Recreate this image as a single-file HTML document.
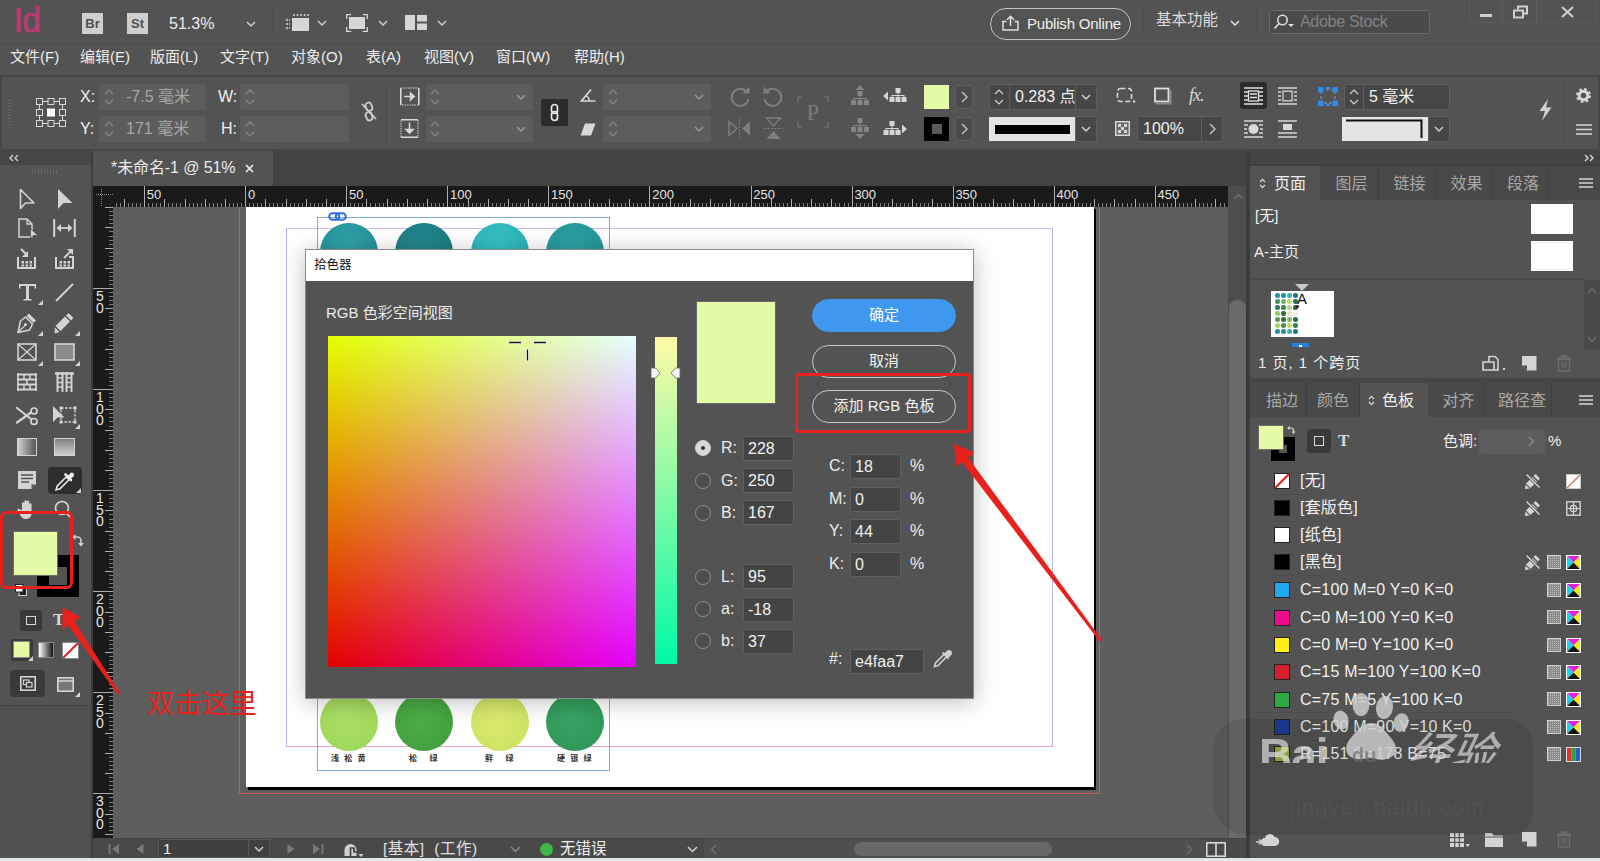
<!DOCTYPE html>
<html lang="zh-CN">
<head>
<meta charset="utf-8">
<title>InDesign 拾色器</title>
<style>
*{box-sizing:border-box;margin:0;padding:0}
html,body{width:1600px;height:861px;overflow:hidden;background:#535353}
body{position:relative;font-family:"Liberation Sans","Noto Sans CJK SC",sans-serif;color:#e6e6e6;font-size:15px;line-height:1}
.a{position:absolute}
.t{position:absolute;white-space:nowrap;line-height:20px;height:20px}
svg{position:absolute;overflow:visible}
/* ===== top bars ===== */
#appbar{left:0;top:0;width:1600px;height:44px;background:#535353}
#menubar{left:0;top:44px;width:1600px;height:31px;background:#535353;border-top:1px solid #4c4c4c}
#ctrl{left:0;top:75px;width:1600px;height:77px;background:#464646}
#ctrlin{left:2px;top:77px;width:1596px;height:72px;background:#535353}
.fld{position:absolute;background:#5d5d5d;border-radius:2px;height:26px}
.fldd{position:absolute;background:#464646;border:1px solid #5f5f5f;border-radius:2px;height:26px}
/* ===== doc area ===== */
#tabstrip{left:93px;top:151px;width:1157px;height:36px;background:#434343}
#doctab{left:93px;top:151px;width:180px;height:35px;background:#535353}
#hruler{left:93px;top:186px;width:1135px;height:21px;background:#1a1a1a}
#vruler{left:93px;top:207px;width:20px;height:631px;background:#1a1a1a}
#paste{left:113px;top:207px;width:1115px;height:631px;background:#5e5e5e;overflow:hidden}
#vscroll{left:1228px;top:186px;width:19px;height:652px;background:#4d4d4d}
#status{left:93px;top:838px;width:1157px;height:20px;background:#494949;border-top:1px solid #444}
#botstrip{left:0;top:858px;width:1600px;height:3px;background:#dfe6ee}
/* ===== toolbox ===== */
#tbhead{left:0;top:151px;width:91px;height:14px;background:#464646}
#tbox{left:0;top:165px;width:91px;height:541px;background:#535353}
#tbelow{left:0;top:705px;width:91px;height:153px;background:#505050;border-top:1px solid #424242}
#tbsep{left:91px;top:152px;width:2px;height:706px;background:#3d3d3d}
/* ===== right dock ===== */
#dock{left:1246px;top:152px;width:354px;height:706px;background:#464646;border-left:4px solid #3b3b3b}
#dockhead{left:1250px;top:152px;width:350px;height:14px;background:#444;border-bottom:2px solid #3c3c3c}
.ptabs{position:absolute;left:1250px;width:350px;height:34px;background:#494949}
.ptab{position:absolute;top:0;height:34px;color:#a8a8a8;font-size:16px;line-height:36px;text-align:center;border-right:1px solid #3f3f3f}
.ptab.on{background:#535353;color:#f0f0f0;border-right:none}
.pbody{position:absolute;left:1250px;width:350px;background:#535353}

.cir{width:58px;height:58px;border-radius:50%}
.lab{top:547px;width:58px;text-align:center;font-size:8px;line-height:10px;color:#333;font-weight:bold;letter-spacing:1.500px}

.btn{left:506px;width:144px;height:33px;border:1.5px solid #c9c9c9;border-radius:17px;text-align:center;font-size:15px;line-height:30px;color:#f2f2f2}
.rad{position:absolute;width:16px;height:16px;border-radius:50%;border:1.5px solid #8e8e8e;background:#4d4d4d}
.rad.on{background:#d8d8d8;border-color:#d8d8d8}
.rad.on::after{content:"";position:absolute;left:4.500px;top:4.500px;width:4px;height:4px;border-radius:50%;background:#333}
.dl{position:absolute;font-size:16px;line-height:20px;height:20px;color:#ececec;white-space:nowrap}
.df{position:absolute;height:25px;background:#444;border:1px solid #606060;border-radius:2px;font-size:16px;line-height:24px;padding-left:4px;color:#f0f0f0}
</style>
</head>
<body>
<!-- TOP BARS -->
<div class="a" id="appbar"></div>
<div class="a" id="menubar"></div>
<div class="a" id="ctrl"></div>
<div class="a" id="ctrlin"></div>
<!--TOPBAR-->
<div class="t" style="left:14px;top:2px;font-size:35px;line-height:36px;height:36px;color:#b83d74;font-weight:normal;-webkit-text-stroke:1px #b83d74;transform:scaleX(.95);transform-origin:0 0;letter-spacing:-.5px">Id</div>
<div class="a" style="left:82px;top:13px;width:21px;height:21px;background:#cfcfcf;color:#505050;font-size:13px;font-weight:bold;line-height:21px;text-align:center">Br</div>
<div class="a" style="left:127px;top:13px;width:21px;height:21px;background:#cfcfcf;color:#505050;font-size:13px;font-weight:bold;line-height:21px;text-align:center">St</div>
<div class="t" style="left:169px;top:14px;font-size:16px;color:#ececec">51.3%</div>
<svg style="left:246px;top:21px" width="10" height="7" viewBox="0 0 10 7"><path d="M1 1l4.0 4 4.0 -4" fill="none" stroke="#cfcfcf" stroke-width="1.500"/></svg><div class="a" style="left:272px;top:8px;width:1px;height:28px;background:#4b4b4b"></div>
<svg style="left:285px;top:13px" width="25" height="19" viewBox="0 0 25 19"><path d="M9 3v-2M12.500 3v-2M16 3v-2M19.500 3v-2M23 3v-2" stroke="#d6d6d6" stroke-width="1.500"/><rect x="7" y="5" width="17" height="13" fill="#d6d6d6"/><path d="M1 7h4M1 11h4M1 15h4" stroke="#d6d6d6" stroke-width="1.500" stroke-dasharray="2 1"/></svg>
<svg style="left:317px;top:20px" width="10" height="7" viewBox="0 0 10 7"><path d="M1 1l4.0 4 4.0 -4" fill="none" stroke="#cfcfcf" stroke-width="1.500"/></svg><svg style="left:346px;top:14px" width="22" height="18" viewBox="0 0 22 18"><rect x="3" y="3" width="16" height="12" fill="#d6d6d6"/><path d="M.7 5v-4.300h4.500M16.800 .7h4.500v4.300M21.300 13v4.300h-4.500M5.200 17.300h-4.500v-4.300" fill="none" stroke="#d6d6d6" stroke-width="1.300"/></svg>
<svg style="left:378px;top:20px" width="10" height="7" viewBox="0 0 10 7"><path d="M1 1l4.0 4 4.0 -4" fill="none" stroke="#cfcfcf" stroke-width="1.500"/></svg><svg style="left:405px;top:15px" width="22" height="15" viewBox="0 0 22 15"><rect x="0" y="0" width="10" height="15" fill="#d6d6d6"/><rect x="12" y="0" width="10" height="6.500" fill="#d6d6d6"/><rect x="12" y="8.500" width="10" height="6.500" fill="#d6d6d6"/></svg>
<svg style="left:437px;top:20px" width="10" height="7" viewBox="0 0 10 7"><path d="M1 1l4.0 4 4.0 -4" fill="none" stroke="#cfcfcf" stroke-width="1.500"/></svg><div class="a" style="left:990px;top:8px;width:141px;height:32px;border:1.5px solid #c4c4c4;border-radius:16px"></div>
<svg style="left:1002px;top:15px" width="17" height="16" viewBox="0 0 17 16"><path d="M4.500 6.500h-3.500v8.500h15v-8.500h-3.500" fill="none" stroke="#e0e0e0" stroke-width="1.500"/><path d="M8.500 11v-9M5 4.800l3.500-3.500 3.500 3.500" fill="none" stroke="#e0e0e0" stroke-width="1.500"/></svg>
<div class="t" style="left:1027px;top:14px;font-size:15px;color:#f0f0f0;letter-spacing:-.2px">Publish Online</div>
<div class="a" style="left:1143px;top:8px;width:1px;height:28px;background:#4b4b4b"></div>
<div class="t" style="left:1156px;top:10px;font-size:15.500px;color:#dcdcdc">基本功能</div>
<svg style="left:1230px;top:20px" width="10" height="7" viewBox="0 0 10 7"><path d="M1 1l4.0 4 4.0 -4" fill="none" stroke="#e6e6e6" stroke-width="1.500"/></svg><div class="a" style="left:1256px;top:8px;width:1px;height:28px;background:#4b4b4b"></div>
<div class="a" style="left:1269px;top:10px;width:161px;height:24px;background:#4a4a4a;border:1px solid #686868;border-radius:3px"></div>
<svg style="left:1273px;top:14px" width="22" height="16" viewBox="0 0 22 16"><circle cx="9.500" cy="6" r="4.700" fill="none" stroke="#dcdcdc" stroke-width="1.600"/><path d="M6 9.500l-4.500 5" stroke="#dcdcdc" stroke-width="1.800"/><path d="M15 10h6l-3 3z" fill="#dcdcdc"/></svg>
<div class="t" style="left:1300px;top:12px;font-size:16px;color:#828282;letter-spacing:-.3px">Adobe Stock</div>
<div class="a" style="left:1469px;top:0;width:127px;height:23px;border:1px solid #5b5b5b;border-top:none"></div>
<div class="a" style="left:1502px;top:0;width:1px;height:23px;background:#5e5e5e"></div><div class="a" style="left:1536px;top:0;width:1px;height:23px;background:#5e5e5e"></div>
<div class="a" style="left:1480px;top:14px;width:12px;height:3px;background:#d0d0d0"></div>
<svg style="left:1513px;top:5px" width="15" height="14" viewBox="0 0 15 14"><path d="M5 4.500v-3h9v7h-3.500" fill="none" stroke="#d0d0d0" stroke-width="2"/><rect x="1" y="5.500" width="9" height="7" fill="none" stroke="#d0d0d0" stroke-width="2"/></svg>
<svg style="left:1561px;top:6px" width="13" height="12" viewBox="0 0 13 12"><path d="M1 1l11 10M12 1l-11 10" stroke="#d0d0d0" stroke-width="2"/></svg>
<div class="t" style="left:10px;top:47px;font-size:15px;color:#ececec">文件(F)</div><div class="t" style="left:80px;top:47px;font-size:15px;color:#ececec">编辑(E)</div><div class="t" style="left:150px;top:47px;font-size:15px;color:#ececec">版面(L)</div><div class="t" style="left:220px;top:47px;font-size:15px;color:#ececec">文字(T)</div><div class="t" style="left:291px;top:47px;font-size:15px;color:#ececec">对象(O)</div><div class="t" style="left:366px;top:47px;font-size:15px;color:#ececec">表(A)</div><div class="t" style="left:424px;top:47px;font-size:15px;color:#ececec">视图(V)</div><div class="t" style="left:496px;top:47px;font-size:15px;color:#ececec">窗口(W)</div><div class="t" style="left:574px;top:47px;font-size:15px;color:#ececec">帮助(H)</div>
<div class="a" style="left:8px;top:100px;width:3px;height:26px;background:repeating-linear-gradient(180deg,#666 0 1px,transparent 1px 3px)"></div>
<svg style="left:35px;top:97px" width="32" height="31" viewBox="0 0 32 31"><g fill="none" stroke="#d8d8d8" stroke-width="1"><rect x="1.5" y="1.5" width="6" height="6"/><rect x="13.0" y="1.5" width="6" height="6"/><rect x="24.5" y="1.5" width="6" height="6"/><rect x="1.5" y="12.5" width="6" height="6"/><rect x="12.5" y="12" width="7" height="7" fill="#fff" stroke="#fff"/><rect x="24.5" y="12.5" width="6" height="6"/><rect x="1.5" y="23.5" width="6" height="6"/><rect x="13.0" y="23.5" width="6" height="6"/><rect x="24.5" y="23.5" width="6" height="6"/><path d="M8 4.500h5M19.500 4.500h5M8 26.500h5M19.500 26.500h5M4.500 8v4.500M4.500 19v4.500M27.500 8v4.500M27.500 19v4.500"/></g></svg>
<div class="t" style="left:80px;top:87px;font-size:16px;color:#f0f0f0">X:</div><div class="t" style="left:80px;top:119px;font-size:16px;color:#f0f0f0">Y:</div>
<div class="fld" style="left:99px;top:84px;width:107px"></div><div class="fld" style="left:99px;top:116px;width:107px"></div>
<svg style="left:104px;top:88px" width="10" height="18" viewBox="0 0 10 18"><path d="M1 6l4-4 4 4M1 12l4 4 4-4" fill="none" stroke="#8a8a8a" stroke-width="1.200"/></svg><svg style="left:104px;top:120px" width="10" height="18" viewBox="0 0 10 18"><path d="M1 6l4-4 4 4M1 12l4 4 4-4" fill="none" stroke="#8a8a8a" stroke-width="1.200"/></svg><div class="t" style="left:126px;top:87px;font-size:16px;color:#a6a6a6">-7.5 毫米</div><div class="t" style="left:126px;top:119px;font-size:16px;color:#a6a6a6">171 毫米</div>
<div class="t" style="left:218px;top:87px;font-size:16px;color:#f0f0f0">W:</div><div class="t" style="left:221px;top:119px;font-size:16px;color:#f0f0f0">H:</div>
<div class="fld" style="left:240px;top:84px;width:109px"></div><div class="fld" style="left:240px;top:116px;width:109px"></div>
<svg style="left:245px;top:88px" width="10" height="18" viewBox="0 0 10 18"><path d="M1 6l4-4 4 4M1 12l4 4 4-4" fill="none" stroke="#8a8a8a" stroke-width="1.200"/></svg><svg style="left:245px;top:120px" width="10" height="18" viewBox="0 0 10 18"><path d="M1 6l4-4 4 4M1 12l4 4 4-4" fill="none" stroke="#8a8a8a" stroke-width="1.200"/></svg><svg style="left:360px;top:101px" width="18" height="21" viewBox="0 0 18 21"><g fill="none" stroke="#d0d0d0" stroke-width="1.800"><rect x="6" y="1.500" width="6" height="8.500" rx="3" transform="rotate(-20 9 6)"/><rect x="6" y="11" width="6" height="8.500" rx="3" transform="rotate(-20 9 15)"/><path d="M2 3l14 15"/></g></svg>
<div class="a" style="left:386px;top:82px;width:1px;height:62px;background:#4a4a4a"></div>
<svg style="left:400px;top:87px" width="20" height="19" viewBox="0 0 20 19"><rect x=".5" y="1" width="18" height="17" fill="none" stroke="#d8d8d8" stroke-width="1" stroke-dasharray="1.500 1"/><path d="M.8 1v17M18.800 1v17" stroke="#d8d8d8" stroke-width="1.600"/><path d="M4 9.500h10M10.500 6l3.700 3.500-3.700 3.500z" fill="#d8d8d8" stroke="#d8d8d8" stroke-width="1.500"/></svg>
<svg style="left:400px;top:119px" width="20" height="19" viewBox="0 0 20 19"><rect x="1" y=".5" width="17" height="18" fill="none" stroke="#d8d8d8" stroke-width="1" stroke-dasharray="1.500 1"/><path d="M1 .8h17M1 18.200h17" stroke="#d8d8d8" stroke-width="1.600"/><path d="M9.500 3.500v10M6 10.500l3.500 3.700 3.500-3.700z" fill="#d8d8d8" stroke="#d8d8d8" stroke-width="1.500"/></svg>
<div class="fld" style="left:426px;top:84px;width:107px"></div><div class="fld" style="left:426px;top:116px;width:107px"></div>
<svg style="left:430px;top:88px" width="10" height="18" viewBox="0 0 10 18"><path d="M1 6l4-4 4 4M1 12l4 4 4-4" fill="none" stroke="#8a8a8a" stroke-width="1.200"/></svg><svg style="left:430px;top:120px" width="10" height="18" viewBox="0 0 10 18"><path d="M1 6l4-4 4 4M1 12l4 4 4-4" fill="none" stroke="#8a8a8a" stroke-width="1.200"/></svg><svg style="left:516px;top:94px" width="10" height="7" viewBox="0 0 10 7"><path d="M1 1l4.0 4 4.0 -4" fill="none" stroke="#9a9a9a" stroke-width="1.500"/></svg><svg style="left:516px;top:126px" width="10" height="7" viewBox="0 0 10 7"><path d="M1 1l4.0 4 4.0 -4" fill="none" stroke="#9a9a9a" stroke-width="1.500"/></svg><div class="a" style="left:541px;top:99px;width:27px;height:27px;background:#2c2c2c;border-radius:2px"></div>
<svg style="left:549px;top:103px" width="11" height="19" viewBox="0 0 11 19"><g fill="none" stroke="#e8e8e8" stroke-width="1.700"><rect x="2.500" y="1.500" width="6" height="9" rx="3"/><rect x="2.500" y="8.500" width="6" height="9" rx="3"/></g></svg>
<svg style="left:580px;top:88px" width="16" height="15" viewBox="0 0 16 15"><path d="M11 1.500l-9.500 11.500h14" fill="none" stroke="#d8d8d8" stroke-width="1.700"/><path d="M6 7.500a7 7 0 0 1 3.500 5.500" fill="none" stroke="#d8d8d8" stroke-width="1.400"/></svg>
<svg style="left:580px;top:123px" width="16" height="13" viewBox="0 0 16 13"><path d="M5 .5h10.500l-4.500 12h-10.500z" fill="#d8d8d8"/></svg>
<div class="fld" style="left:603px;top:84px;width:108px"></div><div class="fld" style="left:603px;top:116px;width:108px"></div>
<svg style="left:608px;top:88px" width="10" height="18" viewBox="0 0 10 18"><path d="M1 6l4-4 4 4M1 12l4 4 4-4" fill="none" stroke="#8a8a8a" stroke-width="1.200"/></svg><svg style="left:608px;top:120px" width="10" height="18" viewBox="0 0 10 18"><path d="M1 6l4-4 4 4M1 12l4 4 4-4" fill="none" stroke="#8a8a8a" stroke-width="1.200"/></svg><svg style="left:694px;top:94px" width="10" height="7" viewBox="0 0 10 7"><path d="M1 1l4.0 4 4.0 -4" fill="none" stroke="#9a9a9a" stroke-width="1.500"/></svg><svg style="left:694px;top:126px" width="10" height="7" viewBox="0 0 10 7"><path d="M1 1l4.0 4 4.0 -4" fill="none" stroke="#9a9a9a" stroke-width="1.500"/></svg><svg style="left:729px;top:85px" width="22" height="22" viewBox="0 0 22 22"><path d="M18.500 8a8.500 8.500 0 1 0 1 6" fill="none" stroke="#7e7e7e" stroke-width="2"/><path d="M13.500 8.500h7v-7z" fill="#7e7e7e"/></svg>
<svg style="left:762px;top:85px" width="22" height="22" viewBox="0 0 22 22"><path d="M3.500 8a8.500 8.500 0 1 1 -1 6" fill="none" stroke="#7e7e7e" stroke-width="2"/><path d="M8.500 8.500h-7v-7z" fill="#7e7e7e"/></svg>
<svg style="left:728px;top:119px" width="23" height="19" viewBox="0 0 23 19"><path d="M1 2.500v14l8-7z" fill="none" stroke="#7e7e7e" stroke-width="1.400"/><path d="M22 2.500v14l-8-7z" fill="#7e7e7e"/><path d="M11.500 0v19" stroke="#7e7e7e" stroke-width="1" stroke-dasharray="2 1.500"/></svg>
<svg style="left:764px;top:117px" width="19" height="23" viewBox="0 0 19 23"><path d="M2.500 1h14l-7 8z" fill="none" stroke="#7e7e7e" stroke-width="1.400"/><path d="M2.500 22h14l-7-8z" fill="#7e7e7e"/><path d="M0 11.500h19" stroke="#7e7e7e" stroke-width="1" stroke-dasharray="2 1.500"/></svg>
<svg style="left:797px;top:96px" width="32" height="32" viewBox="0 0 32 32"><path d="M1 6v-5h4M27 1h4v5M31 26v5h-4M5 31h-4v-5" fill="none" stroke="#7a7a7a" stroke-width="1.200"/><text x="16" y="24" font-family="Liberation Serif,serif" font-size="23" fill="#7a7a7a" text-anchor="middle">P</text></svg>
<svg style="left:848px;top:85px" width="24" height="22" viewBox="0 0 24 22"><g fill="#858585" stroke="none"><path d="M12 0l4.500 5h-9z"/><rect x="9.500" y="6" width="5" height="5"/><rect x="3" y="15" width="5" height="5"/><rect x="9.500" y="15" width="5" height="5"/><rect x="16" y="15" width="5" height="5"/><path d="M5 15v-2h14v2h-1v-1h-5.500v1h-1v-1h-5.500v1z"/><rect x="11.500" y="11" width="1" height="3"/></g></svg>
<svg style="left:848px;top:118px" width="24" height="22" viewBox="0 0 24 22"><g fill="#858585" stroke="none"><rect x="9.500" y="0" width="5" height="5"/><rect x="3" y="9" width="5" height="5"/><rect x="9.500" y="9" width="5" height="5"/><rect x="16" y="9" width="5" height="5"/><path d="M5 9v-2h14v2h-1v-1h-5.500v1h-1v-1h-5.500v1z"/><rect x="11.500" y="5" width="1" height="3"/><path d="M12 21l4.500-5h-9z"/></g></svg>
<svg style="left:883px;top:85px" width="24" height="22" viewBox="0 0 24 22"><g fill="#d6d6d6" stroke="none"><path d="M0 11l5-4.500v9z"/><rect x="12.500" y="3" width="5" height="5"/><rect x="6.500" y="12" width="5" height="5"/><rect x="12.500" y="12" width="5" height="5"/><rect x="18.500" y="12" width="5" height="5"/><path d="M8.500 12v-2h13v2h-1v-1h-5v1h-1v-1h-5v1z"/><rect x="14.500" y="8" width="1" height="3"/></g></svg>
<svg style="left:883px;top:118px" width="24" height="22" viewBox="0 0 24 22"><g fill="#d6d6d6" stroke="none"><path d="M24 11l-5-4.500v9z"/><rect x="6.500" y="3" width="5" height="5"/><rect x=".5" y="12" width="5" height="5"/><rect x="6.500" y="12" width="5" height="5"/><rect x="12.500" y="12" width="5" height="5"/><path d="M2.500 12v-2h13v2h-1v-1h-5v1h-1v-1h-5v1z"/><rect x="8.500" y="8" width="1" height="3"/></g></svg>
<div class="a" style="left:924px;top:85px;width:25px;height:24px;background:#e4faa7"></div>
<div class="a" style="left:955px;top:85px;width:18px;height:24px;background:#4a4a4a;border:1px solid #606060;border-radius:2px"></div><svg style="left:961px;top:91px" width="7" height="12" viewBox="0 0 7 12"><path d="M1 1l5 5-5 5" fill="none" stroke="#bdbdbd" stroke-width="1.500"/></svg><div class="a" style="left:924px;top:117px;width:25px;height:24px;background:#000"></div><div class="a" style="left:932px;top:124px;width:10px;height:10px;background:#5a5a5a"></div>
<div class="a" style="left:955px;top:117px;width:18px;height:24px;background:#4a4a4a;border:1px solid #606060;border-radius:2px"></div><svg style="left:961px;top:123px" width="7" height="12" viewBox="0 0 7 12"><path d="M1 1l5 5-5 5" fill="none" stroke="#bdbdbd" stroke-width="1.500"/></svg><div class="fldd" style="left:989px;top:84px;width:108px;height:26px"></div><div class="a" style="left:1009px;top:85px;width:1px;height:24px;background:#5f5f5f"></div><div class="a" style="left:1075px;top:85px;width:1px;height:24px;background:#5f5f5f"></div>
<svg style="left:994px;top:88px" width="10" height="18" viewBox="0 0 10 18"><path d="M1 6l4-4 4 4M1 12l4 4 4-4" fill="none" stroke="#d0d0d0" stroke-width="1.200"/></svg><svg style="left:1081px;top:94px" width="10" height="7" viewBox="0 0 10 7"><path d="M1 1l4.0 4 4.0 -4" fill="none" stroke="#d0d0d0" stroke-width="1.500"/></svg><div class="t" style="left:1015px;top:87px;font-size:16px;color:#f0f0f0">0.283 点</div>
<div class="a" style="left:989px;top:117px;width:86px;height:24px;background:#e4e4e4"></div><div class="a" style="left:995px;top:125px;width:75px;height:9px;background:#000"></div>
<div class="fldd" style="left:1075px;top:116px;width:22px;height:26px"></div><svg style="left:1081px;top:126px" width="10" height="7" viewBox="0 0 10 7"><path d="M1 1l4.0 4 4.0 -4" fill="none" stroke="#d0d0d0" stroke-width="1.500"/></svg><svg style="left:1116px;top:87px" width="20" height="17" viewBox="0 0 20 17"><rect x="1.500" y="1.500" width="14" height="13" rx="3" fill="none" stroke="#d8d8d8" stroke-width="1.600" stroke-dasharray="5 2.500"/><rect x="17" y="13.500" width="2.200" height="2.200" fill="#d8d8d8"/></svg>
<svg style="left:1153px;top:87px" width="19" height="19" viewBox="0 0 19 19"><rect x="2" y="1.500" width="13.500" height="13" fill="none" stroke="#e0e0e0" stroke-width="1.800"/><path d="M2.500 16.500h15v-13" fill="none" stroke="#888" stroke-width="2.200"/></svg>
<div class="t" style="left:1189px;top:85px;font-size:18px;font-style:italic;color:#d8d8d8;font-family:'Liberation Serif',serif;letter-spacing:-1px">fx.</div>
<svg style="left:1115px;top:121px" width="15" height="15" viewBox="0 0 15 15"><rect x=".7" y=".7" width="13.600" height="13.600" fill="#6a6a6a" stroke="#d8d8d8" stroke-width="1.400"/><path d="M3 3h3v3h-3zM9 3h3v3h-3zM6 6h3v3h-3zM3 9h3v3h-3zM9 9h3v3h-3z" fill="#d8d8d8"/></svg>
<div class="fldd" style="left:1137px;top:116px;width:86px;height:26px"></div><div class="a" style="left:1201px;top:117px;width:1px;height:24px;background:#5f5f5f"></div><svg style="left:1209px;top:123px" width="7" height="12" viewBox="0 0 7 12"><path d="M1 1l5 5-5 5" fill="none" stroke="#bdbdbd" stroke-width="1.500"/></svg><div class="t" style="left:1143px;top:119px;font-size:16px;color:#f0f0f0">100%</div>
<div class="a" style="left:1240px;top:82px;width:27px;height:27px;background:#2c2c2c;border-radius:3px"></div>
<svg style="left:1244px;top:87px" width="19" height="18" viewBox="0 0 19 18"><path d="M0 1h19M0 5h19M0 9h19M0 13h19M0 17h19" stroke="#e0e0e0" stroke-width="1.500"/><rect x="4.500" y="4" width="10" height="10" fill="#2c2c2c" stroke="#e0e0e0" stroke-width="1.300"/><path d="M6 7h7M6 10.500h7" stroke="#e0e0e0" stroke-width="1.300"/></svg>
<svg style="left:1278px;top:87px" width="19" height="18" viewBox="0 0 19 18"><path d="M0 1h19M0 17h19M0 5h3M0 9h3M0 13h3M16 5h3M16 9h3M16 13h3" stroke="#d8d8d8" stroke-width="1.500"/><rect x="5" y="4.200" width="9" height="9.600" fill="none" stroke="#d8d8d8" stroke-width="1.300"/></svg>
<svg style="left:1244px;top:120px" width="19" height="18" viewBox="0 0 19 18"><path d="M0 1h19M0 17h19M0 5h4M0 9h3M0 13h4M15 5h4M16 9h3M15 13h4" stroke="#d8d8d8" stroke-width="1.500"/><circle cx="9.500" cy="9" r="5" fill="#d8d8d8"/></svg>
<svg style="left:1278px;top:120px" width="19" height="18" viewBox="0 0 19 18"><path d="M0 1h19M0 13h19M0 17h19" stroke="#d8d8d8" stroke-width="1.500"/><rect x="5" y="4" width="9" height="6" fill="#d8d8d8"/></svg>
<svg style="left:1318px;top:87px" width="20" height="19" viewBox="0 0 20 19"><rect x="3" y="3" width="14" height="13" fill="none" stroke="#9a9a9a" stroke-width="1" stroke-dasharray="3 2"/><g fill="#2d8ceb"><rect x="0" y="0" width="5.500" height="5.500"/><rect x="14.500" y="0" width="5.500" height="5.500"/><rect x="0" y="13.500" width="5.500" height="5.500"/><rect x="14.500" y="13.500" width="5.500" height="5.500"/><rect x="8" y="0" width="4" height="2.500"/><rect x="8" y="16.500" width="4" height="2.500"/></g></svg>
<div class="fldd" style="left:1344px;top:84px;width:106px;height:26px"></div><div class="a" style="left:1363px;top:85px;width:1px;height:24px;background:#5f5f5f"></div>
<svg style="left:1349px;top:88px" width="10" height="18" viewBox="0 0 10 18"><path d="M1 6l4-4 4 4M1 12l4 4 4-4" fill="none" stroke="#d0d0d0" stroke-width="1.200"/></svg><div class="t" style="left:1369px;top:87px;font-size:16px;color:#f0f0f0">5 毫米</div>
<div class="a" style="left:1342px;top:117px;width:86px;height:24px;background:#e4e4e4"></div><svg style="left:1346px;top:119px" width="80" height="20" viewBox="0 0 80 20"><path d="M0 1.500h75.500v17.500" fill="none" stroke="#111" stroke-width="2"/></svg>
<div class="fldd" style="left:1428px;top:116px;width:22px;height:26px"></div><svg style="left:1434px;top:126px" width="10" height="7" viewBox="0 0 10 7"><path d="M1 1l4.0 4 4.0 -4" fill="none" stroke="#d0d0d0" stroke-width="1.500"/></svg><svg style="left:1538px;top:99px" width="15" height="22" viewBox="0 0 15 22"><path d="M10 0l-8.500 12h5.500l-3 10 9.500-13.500h-5.500z" fill="#d0d0d0"/></svg>
<div class="a" style="left:1564px;top:82px;width:1px;height:62px;background:#4a4a4a"></div>
<svg style="left:1576px;top:88px" width="15" height="15" viewBox="0 0 15 15"><circle cx="7.500" cy="7.500" r="4.300" fill="none" stroke="#d8d8d8" stroke-width="3"/><circle cx="7.500" cy="7.500" r="6.300" fill="none" stroke="#d8d8d8" stroke-width="2.400" stroke-dasharray="2.470 2.470"/></svg>
<svg style="left:1576px;top:124px" width="16" height="11" viewBox="0 0 16 11"><path d="M0 1h16M0 5.500h16M0 10h16" stroke="#d8d8d8" stroke-width="1.600"/></svg>

<!-- DOC AREA -->
<div class="a" id="tabstrip"></div>
<div class="a" id="doctab"></div>
<div class="a" id="hruler"><div class="a" style="left:20px;top:0;width:1115px;height:21px;overflow:hidden"><div class="a" style="left:-69.75px;top:0;width:1400px;height:21px;
background:
 repeating-linear-gradient(90deg,#adadad 0 1px,transparent 1px 101.075px) 0 0/100% 21px no-repeat,
 repeating-linear-gradient(90deg,#adadad 0 1px,transparent 1px 20.215px) 0 13px/100% 8px no-repeat,
 repeating-linear-gradient(90deg,#808080 0 1px,transparent 1px 4.043px) 0 17px/100% 4px no-repeat"></div></div><div class="t" style="left:53.8px;top:2px;font-size:13px;line-height:14px;height:14px;color:#e6e6e6">50</div><div class="t" style="left:154.9px;top:2px;font-size:13px;line-height:14px;height:14px;color:#e6e6e6">0</div><div class="t" style="left:256.0px;top:2px;font-size:13px;line-height:14px;height:14px;color:#e6e6e6">50</div><div class="t" style="left:357.1px;top:2px;font-size:13px;line-height:14px;height:14px;color:#e6e6e6">100</div><div class="t" style="left:458.1px;top:2px;font-size:13px;line-height:14px;height:14px;color:#e6e6e6">150</div><div class="t" style="left:559.2px;top:2px;font-size:13px;line-height:14px;height:14px;color:#e6e6e6">200</div><div class="t" style="left:660.3px;top:2px;font-size:13px;line-height:14px;height:14px;color:#e6e6e6">250</div><div class="t" style="left:761.4px;top:2px;font-size:13px;line-height:14px;height:14px;color:#e6e6e6">300</div><div class="t" style="left:862.4px;top:2px;font-size:13px;line-height:14px;height:14px;color:#e6e6e6">350</div><div class="t" style="left:963.5px;top:2px;font-size:13px;line-height:14px;height:14px;color:#e6e6e6">400</div><div class="t" style="left:1064.6px;top:2px;font-size:13px;line-height:14px;height:14px;color:#e6e6e6">450</div><div class="a" style="left:0;top:0;width:20px;height:21px;background:#1a1a1a"></div><div class="a" style="left:3px;top:8px;width:17px;height:1px;background:repeating-linear-gradient(90deg,#8a8a8a 0 1px,transparent 1px 2px)"></div><div class="a" style="left:8px;top:3px;width:1px;height:18px;background:repeating-linear-gradient(180deg,#8a8a8a 0 1px,transparent 1px 2px)"></div></div>
<div class="a" id="vruler"><div class="a" style="left:0;top:0;width:20px;height:631px;overflow:hidden"><div class="a" style="left:0;top:-19.60px;width:20px;height:800px;
background:
 repeating-linear-gradient(180deg,#adadad 0 1px,transparent 1px 101.075px) 0 0/20px 100% no-repeat,
 repeating-linear-gradient(180deg,#adadad 0 1px,transparent 1px 20.215px) 12px 0/8px 100% no-repeat,
 repeating-linear-gradient(180deg,#808080 0 1px,transparent 1px 4.043px) 16px 0/4px 100% no-repeat"></div></div><div class="a" style="left:1px;top:84.0px;width:12px;font-size:14px;line-height:11.5px;color:#e6e6e6;text-align:center">5<br>0</div><div class="a" style="left:1px;top:185.1px;width:12px;font-size:14px;line-height:11.5px;color:#e6e6e6;text-align:center">1<br>0<br>0</div><div class="a" style="left:1px;top:286.1px;width:12px;font-size:14px;line-height:11.5px;color:#e6e6e6;text-align:center">1<br>5<br>0</div><div class="a" style="left:1px;top:387.2px;width:12px;font-size:14px;line-height:11.5px;color:#e6e6e6;text-align:center">2<br>0<br>0</div><div class="a" style="left:1px;top:488.3px;width:12px;font-size:14px;line-height:11.5px;color:#e6e6e6;text-align:center">2<br>5<br>0</div><div class="a" style="left:1px;top:589.4px;width:12px;font-size:14px;line-height:11.5px;color:#e6e6e6;text-align:center">3<br>0<br>0</div></div>
<div class="a" id="paste">
<div class="a" style="left:126px;top:-10px;width:861px;height:597px;border:1px solid #cc5a55"></div>
<div class="a" style="left:135px;top:2px;width:848px;height:581px;background:#000"></div>
<div class="a" id="page" style="left:133px;top:0;width:848px;height:580px;background:#fff">
  <div class="a" style="left:40px;top:21px;width:767px;height:519px;border:1px solid #b9b5ea;border-top-color:#d0b4e4;border-bottom-color:#e4a4c4"></div>
  <div class="a" style="left:71px;top:10px;width:293px;height:554px;border:1px solid #7fabdc"></div>
  <div class="a cir" style="left:74px;top:16px;background:radial-gradient(circle at 45% 40%,#2fa5aa,#25909a 75%,#208288)"></div>
  <div class="a cir" style="left:149px;top:16px;background:radial-gradient(circle at 45% 40%,#228a90,#1d7a80 75%,#1a6e74)"></div>
  <div class="a cir" style="left:225px;top:16px;background:radial-gradient(circle at 45% 40%,#38c4c8,#2cb0b5 75%,#27a2a8)"></div>
  <div class="a cir" style="left:300px;top:16px;background:radial-gradient(circle at 45% 40%,#2da4a6,#259498 75%,#20888c)"></div>
  <div class="a cir" style="left:74px;top:486px;background:radial-gradient(circle at 45% 40%,#aee068,#9fd85a 75%,#94cd52)"></div>
  <div class="a cir" style="left:149px;top:486px;background:radial-gradient(circle at 45% 40%,#4fae48,#42a03e 75%,#389238)"></div>
  <div class="a cir" style="left:225px;top:486px;background:radial-gradient(circle at 45% 40%,#dcec70,#cfe262 75%,#c2d658)"></div>
  <div class="a cir" style="left:300px;top:486px;background:radial-gradient(circle at 45% 40%,#38a463,#2f9858 75%,#288a4e)"></div>
  <div class="a lab" style="left:74px">浅 松 黄</div>
  <div class="a lab" style="left:149px">松&nbsp;&nbsp;&nbsp;绿</div>
  <div class="a lab" style="left:225px">鲜&nbsp;&nbsp;&nbsp;绿</div>
  <div class="a lab" style="left:300px">硬 银 绿</div>
  <svg style="left:82px;top:5px" width="19" height="9" viewBox="0 0 19 9"><rect x="1.200" y="1.200" width="10" height="6.600" rx="3.300" fill="none" stroke="#2b6fd6" stroke-width="2"/><rect x="7.800" y="1.200" width="10" height="6.600" rx="3.300" fill="none" stroke="#2b6fd6" stroke-width="2"/></svg>
</div>
</div>
<div class="a" id="vscroll"><svg style="left:5px;top:7px" width="11" height="7" viewBox="0 0 11 7"><path d="M1 6l4.500-4.500 4.500 4.500" fill="none" stroke="#6e6e6e" stroke-width="1.500"/></svg><div class="a" style="left:1px;top:114px;width:17px;height:540px;border-radius:8px 8px 0 0;background:#6a6a6a"></div></div>
<div class="a" id="status"><svg style="left:15px;top:4px" width="14" height="12" viewBox="0 0 14 12"><path d="M1.500 1v10" stroke="#7a7a7a" stroke-width="1.800"/><path d="M11 1v10l-7-5z" fill="#7a7a7a"/></svg>
<svg style="left:43px;top:4px" width="8" height="12" viewBox="0 0 8 12"><path d="M7.500 1v10l-7-5z" fill="#7a7a7a"/></svg>
<div class="a" style="left:65px;top:0;width:112px;height:19px;background:#404040;border:1px solid #585858"></div><div class="t" style="left:70px;top:0;font-size:15px;color:#f0f0f0">1</div><div class="a" style="left:155px;top:0;width:22px;height:19px;border:1px solid #585858"></div><svg style="left:161px;top:7px" width="10" height="7" viewBox="0 0 10 7"><path d="M1 1l4 4 4-4" fill="none" stroke="#d0d0d0" stroke-width="1.500"/></svg>
<svg style="left:194px;top:4px" width="8" height="12" viewBox="0 0 8 12"><path d="M.5 1v10l7-5z" fill="#7a7a7a"/></svg>
<svg style="left:217px;top:4px" width="14" height="12" viewBox="0 0 14 12"><path d="M12.500 1v10" stroke="#7a7a7a" stroke-width="1.800"/><path d="M3 1v10l7-5z" fill="#7a7a7a"/></svg>
<svg style="left:249px;top:2px" width="22" height="17" viewBox="0 0 22 17"><path d="M2.500 15v-6a6 6 0 0 1 12 0v6z" fill="#d0d0d0"/><path d="M8.500 15v-8h3.500v4h3" fill="none" stroke="#424242" stroke-width="1.700"/><path d="M16.500 13h5l-2.500 3z" fill="#d0d0d0"/></svg>
<div class="t" style="left:290px;top:0;font-size:15.500px;color:#e0e0e0;letter-spacing:.5px">[基本]&nbsp;&nbsp;(工作)</div><svg style="left:417px;top:7px" width="11" height="7" viewBox="0 0 11 7"><path d="M1 1l4.500 4.500 4.500-4.500" fill="none" stroke="#8a8a8a" stroke-width="1.500"/></svg>
<div class="a" style="left:447px;top:4px;width:13px;height:13px;border-radius:50%;background:#3fb54a"></div><div class="t" style="left:467px;top:0;font-size:15.500px;color:#f0f0f0">无错误</div><svg style="left:594px;top:7px" width="11" height="7" viewBox="0 0 11 7"><path d="M1 1l4.500 4.500 4.500-4.500" fill="none" stroke="#d0d0d0" stroke-width="1.500"/></svg>
<div class="a" style="left:611px;top:0;width:501px;height:20px;background:#4f4f4f"></div><svg style="left:617px;top:5px" width="7" height="11" viewBox="0 0 7 11"><path d="M6 1l-4.500 4.500 4.500 4.500" fill="none" stroke="#6e6e6e" stroke-width="1.500"/></svg>
<div class="a" style="left:761px;top:3px;width:198px;height:14px;border-radius:7px;background:#686868"></div><svg style="left:1093px;top:5px" width="7" height="11" viewBox="0 0 7 11"><path d="M1 1l4.500 4.500-4.500 4.500" fill="none" stroke="#6e6e6e" stroke-width="1.500"/></svg>
<svg style="left:1113px;top:3px" width="20" height="15" viewBox="0 0 20 15"><rect x=".8" y=".8" width="18.400" height="13.400" fill="none" stroke="#d8d8d8" stroke-width="1.600"/><path d="M10 1v13" stroke="#d8d8d8" stroke-width="1.600"/></svg>
</div>
<!-- TOOLBOX -->
<div class="a" id="tbhead"></div>
<div class="a" id="tbox"></div>
<div class="a" id="tbelow"></div>
<div class="a" id="tbsep"></div>
<!--TOOLS-->
<svg style="left:9px;top:154px" width="10" height="8" viewBox="0 0 10 8"><path d="M4 1l-3 3 3 3M9 1l-3 3 3 3" fill="none" stroke="#d4d4d4" stroke-width="1.400"/></svg>
<div class="a" style="left:32px;top:169px;width:26px;height:5px;background:repeating-linear-gradient(90deg,#686868 0 1px,transparent 1px 3px)"></div>
<svg style="left:19px;top:188px" width="17" height="23" viewBox="0 0 17 23"><path d="M1.500 1.500v19l5-5.500h8.500z" fill="none" stroke="#d4d4d4" stroke-width="1.600" stroke-linejoin="round"/></svg>
<svg style="left:57px;top:188px" width="17" height="23" viewBox="0 0 17 23"><path d="M1 1v20l5.500-6h9z" fill="#d4d4d4"/></svg>
<svg style="left:18px;top:218px" width="20" height="21" viewBox="0 0 20 21"><path d="M1 1h8l5 5v13h-13z" fill="none" stroke="#d4d4d4" stroke-width="1.500"/><path d="M9 1v5h5" fill="none" stroke="#d4d4d4" stroke-width="1.300"/><path d="M12.500 10.500v10l2.800-3h4.500z" fill="#d4d4d4" stroke="#535353" stroke-width=".8"/></svg>
<svg style="left:53px;top:219px" width="23" height="18" viewBox="0 0 23 18"><path d="M1.200 0v18M21.800 0v18" stroke="#d4d4d4" stroke-width="2"/><path d="M5 9h13" stroke="#d4d4d4" stroke-width="1.800"/><path d="M3.500 9l4.500-4v8zM19.500 9l-4.500-4v8z" fill="#d4d4d4"/></svg>
<svg style="left:17px;top:248px" width="20" height="21" viewBox="0 0 20 21"><path d="M1 9v11h17v-11" fill="none" stroke="#d4d4d4" stroke-width="2"/><path d="M4.500 13h2.500v2.500h-2.500zM8.500 13h2.500v2.500h-2.500zM12.500 13h2.500v2.500h-2.500zM4.500 16.500h2.500v2h-2.500zM8.500 16.500h2.500v2h-2.500zM12.500 16.500h2.500v2h-2.500z" fill="#d4d4d4"/><path d="M4 1l5.500 5.500" stroke="#d4d4d4" stroke-width="2"/><path d="M11 3v6h-6z" fill="#d4d4d4"/></svg>
<svg style="left:55px;top:248px" width="20" height="21" viewBox="0 0 20 21"><path d="M1 9v11h17v-11h-4" fill="none" stroke="#d4d4d4" stroke-width="2"/><path d="M4.500 13h2.500v2.500h-2.500zM8.500 13h2.500v2.500h-2.500zM12.500 13h2.500v2.500h-2.500zM4.500 16.500h2.500v2h-2.500zM8.500 16.500h2.500v2h-2.500zM12.500 16.500h2.500v2h-2.500z" fill="#d4d4d4"/><path d="M9 10l6.500-6.500" stroke="#d4d4d4" stroke-width="2"/><path d="M12 1h6v6z" fill="#d4d4d4"/></svg>
<svg style="left:18px;top:283px" width="19" height="19" viewBox="0 0 19 19"><path d="M1 1h17v4.500h-1.500v-2.500h-5.500v13h2.500v1.500h-8v-1.500h2.500v-13h-5.500v2.500h-1.500z" fill="#d4d4d4"/></svg>
<svg style="left:38px;top:300px" width="5" height="5" viewBox="0 0 5 5"><path d="M5 0v5h-5z" fill="#d4d4d4"/></svg><svg style="left:55px;top:283px" width="19" height="19" viewBox="0 0 19 19"><path d="M1 18l17-17" stroke="#d4d4d4" stroke-width="1.800"/></svg>
<svg style="left:16px;top:312px" width="22" height="22" viewBox="0 0 22 22"><path d="M13 1.500l7 7-2.500 2.500-7-7z" fill="#d4d4d4"/><path d="M9.500 5l7 7-3 6-11.500 2.500 2.500-11.500z" fill="none" stroke="#d4d4d4" stroke-width="1.600" stroke-linejoin="round"/><path d="M2.500 20l6.500-6.500" stroke="#d4d4d4" stroke-width="1.300"/><circle cx="9.500" cy="12.500" r="1.500" fill="#d4d4d4"/></svg>
<svg style="left:38px;top:331px" width="5" height="5" viewBox="0 0 5 5"><path d="M5 0v5h-5z" fill="#d4d4d4"/></svg><svg style="left:54px;top:312px" width="21" height="22" viewBox="0 0 21 22"><path d="M14.500 1l5 5-2.500 2.500-5-5z" fill="#d4d4d4"/><path d="M11 4.500l5 5-9.500 9.500-5-5z" fill="#d4d4d4"/><path d="M1 15.500l4.500 4.500-5 1.500z" fill="#d4d4d4"/></svg>
<svg style="left:75px;top:331px" width="5" height="5" viewBox="0 0 5 5"><path d="M5 0v5h-5z" fill="#d4d4d4"/></svg><svg style="left:17px;top:343px" width="20" height="18" viewBox="0 0 20 18"><rect x="1" y="1" width="18" height="16" fill="none" stroke="#d4d4d4" stroke-width="1.600"/><path d="M1 1l18 16M19 1l-18 16" stroke="#d4d4d4" stroke-width="1.300"/></svg>
<svg style="left:38px;top:361px" width="5" height="5" viewBox="0 0 5 5"><path d="M5 0v5h-5z" fill="#d4d4d4"/></svg><svg style="left:54px;top:343px" width="21" height="18" viewBox="0 0 21 18"><rect x="1" y="1" width="19" height="16" fill="#8a8a8a" stroke="#d4d4d4" stroke-width="1.600"/></svg>
<svg style="left:75px;top:361px" width="5" height="5" viewBox="0 0 5 5"><path d="M5 0v5h-5z" fill="#d4d4d4"/></svg><svg style="left:17px;top:373px" width="20" height="18" viewBox="0 0 20 18"><path d="M0 1.500h20M0 6.500h20M0 11.500h20M0 16.500h20" stroke="#d4d4d4" stroke-width="2"/><path d="M1 0v18M19 0v18M7 1.500v5M13 1.500v5M10 6.500v5M7 11.500v5M13 11.500v5" stroke="#d4d4d4" stroke-width="1.600"/></svg>
<svg style="left:55px;top:372px" width="19" height="20" viewBox="0 0 19 20"><path d="M0 1.500h19" stroke="#d4d4d4" stroke-width="2.400"/><path d="M2.500 0v20M7.500 0v20M11.500 0v20M16.500 0v20" stroke="#d4d4d4" stroke-width="2"/><path d="M2.500 6h5M11.500 6h5M2.500 10.500h5M11.500 10.500h5M2.500 15h5M11.500 15h5" stroke="#d4d4d4" stroke-width="1.500"/></svg>
<svg style="left:16px;top:406px" width="23" height="20" viewBox="0 0 23 20"><path d="M1 2l14 11M1 16.500l14-10" stroke="#d4d4d4" stroke-width="2.200" stroke-linecap="round"/><circle cx="18" cy="5" r="3" fill="none" stroke="#d4d4d4" stroke-width="1.700"/><circle cx="18" cy="15.500" r="3" fill="none" stroke="#d4d4d4" stroke-width="1.700"/></svg>
<svg style="left:52px;top:405px" width="25" height="21" viewBox="0 0 25 21"><rect x="9" y="3" width="14" height="14" fill="none" stroke="#d4d4d4" stroke-width="1.300" stroke-dasharray="2.500 1.500"/><path d="M7.500 1.500h3v3h-3zM21.500 1.500h3v3h-3zM7.500 15.500h3v3h-3zM21.500 15.500h3v3h-3z" fill="#d4d4d4"/><path d="M1 1v16l4.500-4.500h7z" fill="#d4d4d4"/></svg>
<svg style="left:75px;top:424px" width="5" height="5" viewBox="0 0 5 5"><path d="M5 0v5h-5z" fill="#d4d4d4"/></svg><div class="a" style="left:17px;top:438px;width:20px;height:18px;border:1.5px solid #d4d4d4;background:linear-gradient(90deg,#d0d0d0,#555)"></div>
<div class="a" style="left:54px;top:438px;width:21px;height:18px;border:1.5px solid #d4d4d4;background:linear-gradient(180deg,#808080,#cfcfcf)"></div>
<svg style="left:18px;top:471px" width="18" height="18" viewBox="0 0 18 18"><path d="M0 0h18v13l-5 5h-13z" fill="#d4d4d4"/><path d="M3 4h12M3 7.500h12M3 11h8" stroke="#535353" stroke-width="1.500"/><path d="M13 18v-5h5" fill="#535353" stroke="#d4d4d4" stroke-width="1"/></svg>
<div class="a" style="left:48px;top:467px;width:34px;height:27px;background:#2e2e2e;border-radius:4px"></div>
<svg style="left:54px;top:469px" width="22" height="23" viewBox="0 0 22 23"><path d="M2 21l1.200-4 9-9 2.800 2.800-9 9z" fill="none" stroke="#eee" stroke-width="1.500"/><path d="M11.500 5.500l5.500 5.500" stroke="#eee" stroke-width="2.600" stroke-linecap="round"/><path d="M13.500 7.500l3-3.500a2.300 2.300 0 0 1 3.200 3.200l-3.500 3z" fill="#eee"/></svg>
<svg style="left:76px;top:488px" width="5" height="5" viewBox="0 0 5 5"><path d="M5 0v5h-5z" fill="#d4d4d4"/></svg><svg style="left:17px;top:500px" width="19" height="20" viewBox="0 0 19 20"><path d="M5 10v-6.500a1.200 1.200 0 0 1 2.400 0v5v-7a1.200 1.200 0 0 1 2.400 0v7v-6.500a1.200 1.200 0 0 1 2.400 0v7v-4.500a1.200 1.200 0 0 1 2.400 0v8c0 4-2 6.500-5.500 6.500s-4.500-1.500-6.500-5l-2-3.500c-.8-1.500 1-2.500 2-1.200z" fill="#d4d4d4"/></svg>
<svg style="left:54px;top:500px" width="20" height="20" viewBox="0 0 20 20"><circle cx="8" cy="8" r="6.500" fill="none" stroke="#d4d4d4" stroke-width="1.700"/><path d="M12.500 13l6 6" stroke="#d4d4d4" stroke-width="2.400"/></svg>
<div class="a" style="left:37px;top:555px;width:42px;height:42px;background:#000"></div><div class="a" style="left:49px;top:567px;width:18px;height:18px;background:#535353"></div>
<div class="a" style="left:13px;top:531px;width:45px;height:45px;background:#e4faa7;border:1px solid #6d6d6d"></div>
<svg style="left:72px;top:534px" width="11" height="13" viewBox="0 0 11 13"><path d="M1 3h4.500a3.500 3.500 0 0 1 3.500 3.500v3" fill="none" stroke="#d4d4d4" stroke-width="1.500"/><path d="M0 3l3.500-3v6zM9 12.500l-3-3.500h6z" fill="#d4d4d4"/></svg>
<svg style="left:15px;top:584px" width="12" height="12" viewBox="0 0 12 12"><rect x="4" y="4" width="7.500" height="7.500" fill="#222" stroke="#d4d4d4" stroke-width="1"/><rect x=".5" y=".5" width="7.500" height="7.500" fill="#fff" stroke="#222" stroke-width="1"/></svg>
<div class="a" style="left:20px;top:610px;width:22px;height:21px;background:#3a3a3a;border-radius:3px"></div><div class="a" style="left:26px;top:616px;width:10px;height:9px;border:1.5px solid #d8d8d8"></div>
<div class="t" style="left:53px;top:610px;font-family:'Liberation Serif',serif;font-weight:bold;font-size:17px;color:#d8d8d8">T</div>
<div class="a" style="left:11px;top:639px;width:22px;height:22px;background:#3a3a3a;border-radius:2px"></div><div class="a" style="left:13px;top:641px;width:17px;height:17px;background:#e4faa7;border:1px solid #888"></div><svg style="left:28px;top:656px" width="5" height="5" viewBox="0 0 5 5"><path d="M5 0v5h-5z" fill="#d4d4d4"/></svg><div class="a" style="left:38px;top:642px;width:16px;height:16px;background:linear-gradient(90deg,#fff,#111);border:1px solid #888"></div>
<svg style="left:62px;top:642px" width="17" height="17" viewBox="0 0 17 17"><rect x=".5" y=".5" width="16" height="16" fill="#fff" stroke="#888"/><path d="M1 16l15-15" stroke="#e0201c" stroke-width="2"/></svg>
<div class="a" style="left:10px;top:670px;width:35px;height:27px;background:#3a3a3a;border-radius:4px"></div>
<svg style="left:20px;top:676px" width="16" height="15" viewBox="0 0 16 15"><rect x=".8" y=".8" width="14.400" height="13.400" fill="none" stroke="#d4d4d4" stroke-width="1.600"/><rect x="3.500" y="4" width="5.500" height="4.500" fill="none" stroke="#d4d4d4" stroke-width="1.200"/><rect x="6.500" y="6.500" width="5.500" height="4.500" fill="#3a3a3a" stroke="#d4d4d4" stroke-width="1.200"/></svg>
<svg style="left:57px;top:677px" width="17" height="15" viewBox="0 0 17 15"><rect x=".8" y=".8" width="15.400" height="13.400" fill="#777" stroke="#d4d4d4" stroke-width="1.600"/><path d="M1 4h15" stroke="#d4d4d4" stroke-width="1.500"/></svg>
<svg style="left:75px;top:692px" width="5" height="5" viewBox="0 0 5 5"><path d="M5 0v5h-5z" fill="#d4d4d4"/></svg><!-- RIGHT DOCK -->
<div class="a" id="dock"></div>
<div class="a" id="dockhead"></div>
<div class="t" style="left:111px;top:158px;font-size:16px;color:#ececec;letter-spacing:-.1px">*未命名-1 @ 51%</div>
<svg style="left:245px;top:164px" width="9" height="9" viewBox="0 0 9 9"><path d="M1 1l7 7M8 1l-7 7" stroke="#ececec" stroke-width="1.700"/></svg>
<svg style="left:1584px;top:154px" width="10" height="8" viewBox="0 0 10 8"><path d="M1 1l3 3-3 3M6 1l3 3-3 3" fill="none" stroke="#d4d4d4" stroke-width="1.400"/></svg>
<div class="ptabs" style="top:166px"><div class="ptab on" style="left:0;width:70px;padding-left:10px">页面</div><div class="ptab" style="left:70px;width:59px;padding-left:5px">图层</div><div class="ptab" style="left:129px;width:57px;padding-left:5px">链接</div><div class="ptab" style="left:186px;width:57px;padding-left:5px">效果</div><div class="ptab" style="left:243px;width:56px;padding-left:5px">段落</div></div>
<svg style="left:1259px;top:178px" width="7" height="11" viewBox="0 0 7 11"><path d="M1 4l2.500-2.500 2.500 2.500M1 7l2.500 2.500 2.500-2.500" fill="none" stroke="#d0d0d0" stroke-width="1.300"/></svg>
<svg style="left:1579px;top:178px" width="14" height="10" viewBox="0 0 14 10"><path d="M0 1h14M0 5h14M0 9h14" stroke="#d4d4d4" stroke-width="1.500"/></svg>
<div class="pbody" style="top:200px;height:178px"></div>
<div class="t" style="left:1255px;top:206px;font-size:15px;color:#f0f0f0">[无]</div><div class="a" style="left:1531px;top:204px;width:42px;height:30px;background:#fff"></div><div class="t" style="left:1254px;top:242px;font-size:15px;color:#f0f0f0">A-主页</div><div class="a" style="left:1531px;top:241px;width:42px;height:30px;background:#fff"></div>
<div class="a" style="left:1250px;top:278px;width:334px;height:2px;background:#484848"></div><div class="a" style="left:1584px;top:280px;width:16px;height:70px;background:#4a4a4a"></div><svg style="left:1587px;top:287px" width="10" height="7" viewBox="0 0 10 7"><path d="M1 6l4-4.500 4 4.500" fill="none" stroke="#6e6e6e" stroke-width="1.400"/></svg>
<svg style="left:1587px;top:336px" width="10" height="7" viewBox="0 0 10 7"><path d="M1 1l4 4.500 4-4.500" fill="none" stroke="#6e6e6e" stroke-width="1.400"/></svg>
<svg style="left:1295px;top:284px" width="14" height="7" viewBox="0 0 14 7"><path d="M0 0h14l-7 7z" fill="#c8c8c8"/></svg>
<div class="a" style="left:1271px;top:291px;width:63px;height:46px;background:#fff"><div class="a" style="left:4px;top:2px;width:4.500px;height:4.500px;border-radius:50%;background:#2a8e96"></div><div class="a" style="left:10px;top:2px;width:4.500px;height:4.500px;border-radius:50%;background:#2a8e96"></div><div class="a" style="left:16px;top:2px;width:4.500px;height:4.500px;border-radius:50%;background:#3cb0b4"></div><div class="a" style="left:22px;top:2px;width:4.500px;height:4.500px;border-radius:50%;background:#237a80"></div><div class="a" style="left:4px;top:8px;width:4.500px;height:4.500px;border-radius:50%;background:#3a9a6a"></div><div class="a" style="left:10px;top:8px;width:4.500px;height:4.500px;border-radius:50%;background:#7ab060"></div><div class="a" style="left:16px;top:8px;width:4.500px;height:4.500px;border-radius:50%;background:#c8d870"></div><div class="a" style="left:22px;top:8px;width:4.500px;height:4.500px;border-radius:50%;background:#2a6e50"></div><div class="a" style="left:4px;top:14px;width:4.500px;height:4.500px;border-radius:50%;background:#2a7a60"></div><div class="a" style="left:10px;top:14px;width:4.500px;height:4.500px;border-radius:50%;background:#3a8a50"></div><div class="a" style="left:16px;top:14px;width:4.500px;height:4.500px;border-radius:50%;background:#b8d080"></div><div class="a" style="left:22px;top:14px;width:4.500px;height:4.500px;border-radius:50%;background:#285a48"></div><div class="a" style="left:4px;top:20px;width:4.500px;height:4.500px;border-radius:50%;background:#98c860"></div><div class="a" style="left:10px;top:20px;width:4.500px;height:4.500px;border-radius:50%;background:#386a38"></div><div class="a" style="left:16px;top:20px;width:4.500px;height:4.500px;border-radius:50%;background:#e0e8c0"></div><div class="a" style="left:22px;top:20px;width:4.500px;height:4.500px;border-radius:50%;background:#f0f0e0"></div><div class="a" style="left:4px;top:26px;width:4.500px;height:4.500px;border-radius:50%;background:#58a050"></div><div class="a" style="left:10px;top:26px;width:4.500px;height:4.500px;border-radius:50%;background:#2a7040"></div><div class="a" style="left:16px;top:26px;width:4.500px;height:4.500px;border-radius:50%;background:#88b858"></div><div class="a" style="left:22px;top:26px;width:4.500px;height:4.500px;border-radius:50%;background:#2a6a48"></div><div class="a" style="left:4px;top:32px;width:4.500px;height:4.500px;border-radius:50%;background:#a8d060"></div><div class="a" style="left:10px;top:32px;width:4.500px;height:4.500px;border-radius:50%;background:#409840"></div><div class="a" style="left:16px;top:32px;width:4.500px;height:4.500px;border-radius:50%;background:#c8d860"></div><div class="a" style="left:22px;top:32px;width:4.500px;height:4.500px;border-radius:50%;background:#2a8850"></div><div class="a" style="left:4px;top:38px;width:4.500px;height:4.500px;border-radius:50%;background:#2a8e96"></div><div class="a" style="left:10px;top:38px;width:4.500px;height:4.500px;border-radius:50%;background:#2a8e96"></div><div class="a" style="left:16px;top:38px;width:4.500px;height:4.500px;border-radius:50%;background:#3cb0b4"></div><div class="a" style="left:22px;top:38px;width:4.500px;height:4.500px;border-radius:50%;background:#237a80"></div><div class="a" style="left:25px;top:14px;width:3px;height:3px;border-radius:50%;background:#222"></div><div class="t" style="left:26px;top:0px;font-size:15px;line-height:16px;color:#111">A</div></div>
<div class="a" style="left:1292px;top:343px;width:17px;height:4px;background:#2d7fe0"></div><div class="a" style="left:1299px;top:345px;width:3px;height:2px;background:#fff"></div>
<div class="t" style="left:1258px;top:353px;font-size:15px;color:#f0f0f0;letter-spacing:1px">1 页, 1 个跨页</div>
<svg style="left:1482px;top:355px" width="24" height="17" viewBox="0 0 24 17"><path d="M1 7h11v8h-11z" fill="none" stroke="#d4d4d4" stroke-width="1.600"/><path d="M7 7v-5.500h6l3 3v10.500h-4" fill="none" stroke="#d4d4d4" stroke-width="1.600"/><rect x="21" y="13" width="2" height="2" fill="#d4d4d4"/></svg>
<svg style="left:1522px;top:356px" width="15" height="15" viewBox="0 0 15 15"><path d="M0 0h14.500v14.500h-9l-5.500-5.500z" fill="#d4d4d4"/><path d="M0 9h5.500v5.500" fill="#535353" stroke="#d4d4d4" stroke-width="1"/></svg>
<svg style="left:1557px;top:355px" width="14" height="17" viewBox="0 0 14 17"><path d="M0 3h14M4.500 3v-2h5v2" fill="none" stroke="#6e6e6e" stroke-width="1.400"/><path d="M1.500 4.500h11v11.500h-11z" fill="none" stroke="#6e6e6e" stroke-width="1.400"/><path d="M5 7v6.500M7 7v6.500M9 7v6.500" stroke="#6e6e6e" stroke-width="1"/></svg>
<div class="ptabs" style="top:383px"><div class="ptab" style="left:0;width:57px;padding-left:8px">描边</div><div class="ptab" style="left:57px;width:53px">颜色</div><div class="ptab on" style="left:110px;width:68px;padding-left:8px">色板</div><div class="ptab" style="left:178px;width:56px;padding-left:6px">对齐</div><div class="ptab" style="left:234px;width:68px;overflow:hidden;white-space:nowrap;text-align:left;padding-left:14px">路径查</div></div>
<svg style="left:1368px;top:395px" width="7" height="11" viewBox="0 0 7 11"><path d="M1 4l2.500-2.500 2.500 2.500M1 7l2.500 2.500 2.500-2.500" fill="none" stroke="#d0d0d0" stroke-width="1.300"/></svg>
<svg style="left:1579px;top:395px" width="14" height="10" viewBox="0 0 14 10"><path d="M0 1h14M0 5h14M0 9h14" stroke="#d4d4d4" stroke-width="1.500"/></svg>
<div class="pbody" style="top:417px;height:441px"></div>
<div class="a" style="left:1271px;top:437px;width:24px;height:24px;background:#000"></div><div class="a" style="left:1279px;top:445px;width:8px;height:8px;background:#535353"></div><div class="a" style="left:1258px;top:425px;width:26px;height:25px;background:#e4faa7;border:1px solid #6d6d6d"></div><svg style="left:1287px;top:426px" width="8" height="8" viewBox="0 0 8 8"><path d="M1 2h3a2.500 2.500 0 0 1 2.500 2.500v2" fill="none" stroke="#d4d4d4" stroke-width="1.200"/><path d="M0 2l2.500-2v4zM6.500 8l-2-2.500h4z" fill="#d4d4d4"/></svg>
<div class="a" style="left:1307px;top:429px;width:24px;height:24px;background:#3a3a3a;border-radius:3px"></div><div class="a" style="left:1314px;top:436px;width:10px;height:10px;border:1.500px solid #d8d8d8"></div><div class="t" style="left:1338px;top:431px;font-family:'Liberation Serif',serif;font-weight:bold;font-size:17px;color:#d8d8d8">T</div><div class="t" style="left:1443px;top:431px;font-size:15px;color:#f0f0f0">色调:</div><div class="a" style="left:1479px;top:429px;width:66px;height:25px;background:#5d5d5d;border-radius:2px"></div><svg style="left:1528px;top:436px" width="7" height="11" viewBox="0 0 7 11"><path d="M1 1l4.500 4.500-4.500 4.500" fill="none" stroke="#8a8a8a" stroke-width="1.400"/></svg>
<div class="t" style="left:1548px;top:431px;font-size:15px;color:#f0f0f0">%</div>
<div class="a" style="left:1258px;top:494px;width:334px;height:1px;background:#4e4e4e"></div><svg style="left:1274px;top:473px" width="16" height="16" viewBox="0 0 16 16"><rect x=".5" y=".5" width="15" height="15" fill="#fff" stroke="#222"/><path d="M1 15l14-14" stroke="#e0201c" stroke-width="2.200"/></svg>
<div class="t" style="left:1300px;top:471px;font-size:16px;color:#f0f0f0;letter-spacing:.2px">[无]</div><svg style="left:1525px;top:473px" width="16" height="16" viewBox="0 0 16 16"><path d="M10.500 1l4.500 4.500-2 2-4.500-4.500zM7.500 4l4.500 4.500-6.500 6.500-4.500-4.500zM.5 11.500l4 4-4.500.5z" fill="#d4d4d4"/><path d="M1.500 1.500l13 13" stroke="#535353" stroke-width="3"/><path d="M1.500 1.500l13 13" stroke="#d4d4d4" stroke-width="1.400"/></svg>
<svg style="left:1566px;top:474px" width="15" height="15" viewBox="0 0 15 15"><rect x=".5" y=".5" width="14" height="14" fill="#fff" stroke="#c8c8c8"/><path d="M1 14l13-13" stroke="#c07050" stroke-width="1.300"/></svg>

<div class="a" style="left:1258px;top:521px;width:334px;height:1px;background:#4e4e4e"></div><div class="a" style="left:1274px;top:500px;width:16px;height:16px;background:#000;border:1px solid #222"></div><div class="t" style="left:1300px;top:498px;font-size:16px;color:#f0f0f0;letter-spacing:.2px">[套版色]</div><svg style="left:1525px;top:500px" width="16" height="16" viewBox="0 0 16 16"><path d="M10.500 1l4.500 4.500-2 2-4.500-4.500zM7.500 4l4.500 4.500-6.500 6.500-4.500-4.500zM.5 11.500l4 4-4.500.5z" fill="#d4d4d4"/><path d="M1.500 1.500l13 13" stroke="#535353" stroke-width="3"/><path d="M1.500 1.500l13 13" stroke="#d4d4d4" stroke-width="1.400"/></svg>
<svg style="left:1566px;top:501px" width="15" height="15" viewBox="0 0 15 15"><rect x=".8" y=".8" width="13.400" height="13.400" fill="none" stroke="#d4d4d4" stroke-width="1.400"/><circle cx="7.500" cy="7.500" r="3.200" fill="none" stroke="#d4d4d4" stroke-width="1.300"/><path d="M7.500 1v13M1 7.500h13" stroke="#d4d4d4" stroke-width="1.200"/></svg>

<div class="a" style="left:1258px;top:548px;width:334px;height:1px;background:#4e4e4e"></div><div class="a" style="left:1274px;top:527px;width:16px;height:16px;background:#fff;border:1px solid #222"></div><div class="t" style="left:1300px;top:525px;font-size:16px;color:#f0f0f0;letter-spacing:.2px">[纸色]</div>
<div class="a" style="left:1258px;top:575px;width:334px;height:1px;background:#4e4e4e"></div><div class="a" style="left:1274px;top:554px;width:16px;height:16px;background:#000;border:1px solid #222"></div><div class="t" style="left:1300px;top:552px;font-size:16px;color:#f0f0f0;letter-spacing:.2px">[黑色]</div><svg style="left:1525px;top:554px" width="16" height="16" viewBox="0 0 16 16"><path d="M10.500 1l4.500 4.500-2 2-4.500-4.500zM7.500 4l4.500 4.500-6.500 6.500-4.500-4.500zM.5 11.500l4 4-4.500.5z" fill="#d4d4d4"/><path d="M1.500 1.500l13 13" stroke="#535353" stroke-width="3"/><path d="M1.500 1.500l13 13" stroke="#d4d4d4" stroke-width="1.400"/></svg>
<div class="a" style="left:1547px;top:555px;width:14px;height:14px;background:#b8b8b8;border:1px solid #d0d0d0;background-image:repeating-linear-gradient(90deg,transparent 0 1px,#8a8a8a 1px 2px),repeating-linear-gradient(180deg,transparent 0 1px,#8a8a8a 1px 2px)"></div><svg style="left:1566px;top:555px" width="15" height="15" viewBox="0 0 15 15"><rect x="0" y="0" width="15" height="15" fill="#fff"/><path d="M1 1h13l-6.500 6.500z" fill="#e91ee0"/><path d="M1 1l6.500 6.500-6.500 6.500z" fill="#17d4ea"/><path d="M14 1l-6.500 6.500 6.500 6.500z" fill="#f5ea14"/><path d="M1 14l6.500-6.500 6.500 6.500z" fill="#111"/></svg>

<div class="a" style="left:1258px;top:603px;width:334px;height:1px;background:#4e4e4e"></div><div class="a" style="left:1274px;top:582px;width:16px;height:16px;background:#1ea8ee;border:1px solid #222"></div><div class="t" style="left:1300px;top:580px;font-size:16px;color:#f0f0f0;letter-spacing:.2px">C=100 M=0 Y=0 K=0</div><div class="a" style="left:1547px;top:583px;width:14px;height:14px;background:#b8b8b8;border:1px solid #d0d0d0;background-image:repeating-linear-gradient(90deg,transparent 0 1px,#8a8a8a 1px 2px),repeating-linear-gradient(180deg,transparent 0 1px,#8a8a8a 1px 2px)"></div><svg style="left:1566px;top:583px" width="15" height="15" viewBox="0 0 15 15"><rect x="0" y="0" width="15" height="15" fill="#fff"/><path d="M1 1h13l-6.500 6.500z" fill="#e91ee0"/><path d="M1 1l6.500 6.500-6.500 6.500z" fill="#17d4ea"/><path d="M14 1l-6.500 6.500 6.500 6.500z" fill="#f5ea14"/><path d="M1 14l6.500-6.500 6.500 6.500z" fill="#111"/></svg>

<div class="a" style="left:1258px;top:630px;width:334px;height:1px;background:#4e4e4e"></div><div class="a" style="left:1274px;top:610px;width:16px;height:16px;background:#ee0a8c;border:1px solid #222"></div><div class="t" style="left:1300px;top:608px;font-size:16px;color:#f0f0f0;letter-spacing:.2px">C=0 M=100 Y=0 K=0</div><div class="a" style="left:1547px;top:610px;width:14px;height:14px;background:#b8b8b8;border:1px solid #d0d0d0;background-image:repeating-linear-gradient(90deg,transparent 0 1px,#8a8a8a 1px 2px),repeating-linear-gradient(180deg,transparent 0 1px,#8a8a8a 1px 2px)"></div><svg style="left:1566px;top:610px" width="15" height="15" viewBox="0 0 15 15"><rect x="0" y="0" width="15" height="15" fill="#fff"/><path d="M1 1h13l-6.500 6.500z" fill="#e91ee0"/><path d="M1 1l6.500 6.500-6.500 6.500z" fill="#17d4ea"/><path d="M14 1l-6.500 6.500 6.500 6.500z" fill="#f5ea14"/><path d="M1 14l6.500-6.500 6.500 6.500z" fill="#111"/></svg>

<div class="a" style="left:1258px;top:658px;width:334px;height:1px;background:#4e4e4e"></div><div class="a" style="left:1274px;top:637px;width:16px;height:16px;background:#ffee12;border:1px solid #222"></div><div class="t" style="left:1300px;top:635px;font-size:16px;color:#f0f0f0;letter-spacing:.2px">C=0 M=0 Y=100 K=0</div><div class="a" style="left:1547px;top:638px;width:14px;height:14px;background:#b8b8b8;border:1px solid #d0d0d0;background-image:repeating-linear-gradient(90deg,transparent 0 1px,#8a8a8a 1px 2px),repeating-linear-gradient(180deg,transparent 0 1px,#8a8a8a 1px 2px)"></div><svg style="left:1566px;top:638px" width="15" height="15" viewBox="0 0 15 15"><rect x="0" y="0" width="15" height="15" fill="#fff"/><path d="M1 1h13l-6.500 6.500z" fill="#e91ee0"/><path d="M1 1l6.500 6.500-6.500 6.500z" fill="#17d4ea"/><path d="M14 1l-6.500 6.500 6.500 6.500z" fill="#f5ea14"/><path d="M1 14l6.500-6.500 6.500 6.500z" fill="#111"/></svg>

<div class="a" style="left:1258px;top:685px;width:334px;height:1px;background:#4e4e4e"></div><div class="a" style="left:1274px;top:664px;width:16px;height:16px;background:#d4202a;border:1px solid #222"></div><div class="t" style="left:1300px;top:662px;font-size:16px;color:#f0f0f0;letter-spacing:.2px">C=15 M=100 Y=100 K=0</div><div class="a" style="left:1547px;top:665px;width:14px;height:14px;background:#b8b8b8;border:1px solid #d0d0d0;background-image:repeating-linear-gradient(90deg,transparent 0 1px,#8a8a8a 1px 2px),repeating-linear-gradient(180deg,transparent 0 1px,#8a8a8a 1px 2px)"></div><svg style="left:1566px;top:665px" width="15" height="15" viewBox="0 0 15 15"><rect x="0" y="0" width="15" height="15" fill="#fff"/><path d="M1 1h13l-6.500 6.500z" fill="#e91ee0"/><path d="M1 1l6.500 6.500-6.500 6.500z" fill="#17d4ea"/><path d="M14 1l-6.500 6.500 6.500 6.500z" fill="#f5ea14"/><path d="M1 14l6.500-6.500 6.500 6.500z" fill="#111"/></svg>

<div class="a" style="left:1258px;top:712px;width:334px;height:1px;background:#4e4e4e"></div><div class="a" style="left:1274px;top:692px;width:16px;height:16px;background:#30a848;border:1px solid #222"></div><div class="t" style="left:1300px;top:690px;font-size:16px;color:#f0f0f0;letter-spacing:.2px">C=75 M=5 Y=100 K=0</div><div class="a" style="left:1547px;top:692px;width:14px;height:14px;background:#b8b8b8;border:1px solid #d0d0d0;background-image:repeating-linear-gradient(90deg,transparent 0 1px,#8a8a8a 1px 2px),repeating-linear-gradient(180deg,transparent 0 1px,#8a8a8a 1px 2px)"></div><svg style="left:1566px;top:692px" width="15" height="15" viewBox="0 0 15 15"><rect x="0" y="0" width="15" height="15" fill="#fff"/><path d="M1 1h13l-6.500 6.500z" fill="#e91ee0"/><path d="M1 1l6.500 6.500-6.500 6.500z" fill="#17d4ea"/><path d="M14 1l-6.500 6.500 6.500 6.500z" fill="#f5ea14"/><path d="M1 14l6.500-6.500 6.500 6.500z" fill="#111"/></svg>

<div class="a" style="left:1258px;top:740px;width:334px;height:1px;background:#4e4e4e"></div><div class="a" style="left:1274px;top:719px;width:16px;height:16px;background:#1f3c98;border:1px solid #222"></div><div class="t" style="left:1300px;top:717px;font-size:16px;color:#f0f0f0;letter-spacing:.2px">C=100 M=90 Y=10 K=0</div><div class="a" style="left:1547px;top:720px;width:14px;height:14px;background:#b8b8b8;border:1px solid #d0d0d0;background-image:repeating-linear-gradient(90deg,transparent 0 1px,#8a8a8a 1px 2px),repeating-linear-gradient(180deg,transparent 0 1px,#8a8a8a 1px 2px)"></div><svg style="left:1566px;top:720px" width="15" height="15" viewBox="0 0 15 15"><rect x="0" y="0" width="15" height="15" fill="#fff"/><path d="M1 1h13l-6.500 6.500z" fill="#e91ee0"/><path d="M1 1l6.500 6.500-6.500 6.500z" fill="#17d4ea"/><path d="M14 1l-6.500 6.500 6.500 6.500z" fill="#f5ea14"/><path d="M1 14l6.500-6.500 6.500 6.500z" fill="#111"/></svg>

<div class="a" style="left:1258px;top:768px;width:334px;height:1px;background:#4e4e4e"></div><div class="a" style="left:1274px;top:746px;width:16px;height:16px;background:#97b24b;border:1px solid #222"></div><div class="t" style="left:1300px;top:744px;font-size:16px;color:#f0f0f0;letter-spacing:.2px">R=151 G=178 B=75</div><div class="a" style="left:1547px;top:747px;width:14px;height:14px;background:#b8b8b8;border:1px solid #d0d0d0;background-image:repeating-linear-gradient(90deg,transparent 0 1px,#8a8a8a 1px 2px),repeating-linear-gradient(180deg,transparent 0 1px,#8a8a8a 1px 2px)"></div><svg style="left:1566px;top:747px" width="15" height="15" viewBox="0 0 15 15"><rect x="0" y="0" width="15" height="15" fill="#ddd"/><rect x="1" y="1" width="4.400" height="13" fill="#e03030"/><rect x="5.400" y="1" width="4.300" height="13" fill="#30a040"/><rect x="9.700" y="1" width="4.300" height="13" fill="#2060d0"/></svg>

<svg style="left:1256px;top:833px" width="24" height="14" viewBox="0 0 24 14"><path d="M9 13a4 4 0 0 1 0-8 5 5 0 0 1 9.500-1 4.500 4.500 0 0 1 .5 9z" fill="#d4d4d4"/><path d="M0 9h5M3 6.500l3 2.500-3 2.500" fill="none" stroke="#d4d4d4" stroke-width="1.500"/></svg>
<svg style="left:1450px;top:833px" width="20" height="15" viewBox="0 0 20 15"><rect x="0" y="0" width="14" height="14" fill="#d4d4d4"/><path d="M0 4.700h14M0 9.400h14M4.700 0v14M9.400 0v14" stroke="#535353" stroke-width="1.200"/><path d="M15.500 11h4.500l-2.200 3z" fill="#d4d4d4"/></svg>
<svg style="left:1485px;top:833px" width="18" height="14" viewBox="0 0 18 14"><path d="M0 0h7l1.500 2.500h9.500v11.500h-18z" fill="#d4d4d4"/><path d="M0 4h18" stroke="#535353" stroke-width="1"/></svg>
<svg style="left:1522px;top:832px" width="15" height="15" viewBox="0 0 15 15"><path d="M0 0h14.500v14.500h-9l-5.500-5.500z" fill="#d4d4d4"/><path d="M0 9h5.500v5.500" fill="#535353" stroke="#d4d4d4" stroke-width="1"/></svg>
<svg style="left:1557px;top:831px" width="14" height="17" viewBox="0 0 14 17"><path d="M0 3h14M4.500 3v-2h5v2" fill="none" stroke="#6e6e6e" stroke-width="1.400"/><path d="M1.500 4.500h11v11.500h-11z" fill="none" stroke="#6e6e6e" stroke-width="1.400"/><path d="M5 7v6.500M7 7v6.500M9 7v6.500" stroke="#6e6e6e" stroke-width="1"/></svg>


<div class="a" id="dlg" style="left:305px;top:249px;width:669px;height:450px;background:#535353;border:1px solid #8a8a8a;box-shadow:0 3px 22px 0 rgba(0,0,0,.26)">
  <div class="a" style="left:0;top:0;width:667px;height:31px;background:#fff"></div>
  <div class="t" style="left:8px;top:5px;font-size:12.5px;color:#111">拾色器</div>
  <div class="t" style="left:20px;top:53px;font-size:15px;color:#ececec">RGB 色彩空间视图</div>
  <div class="a" id="field" style="left:22px;top:86px;width:308px;height:331px;background:linear-gradient(90deg,rgb(228,0,0),rgb(228,0,255));isolation:isolate">
    <div class="a" style="left:0;top:0;width:100%;height:100%;background:linear-gradient(180deg,rgb(0,255,0),rgb(0,0,0));mix-blend-mode:screen"></div>
  </div>
  <svg style="left:200px;top:88px" width="44" height="26" viewBox="0 0 44 26"><g stroke="#fff" stroke-width="3" opacity=".8"><path d="M2.5 4.5h13M27.500 4.5h13M21.5 11v12"/></g><g stroke="#111" stroke-width="1.3"><path d="M3 4.500h12M28 4.500h12M21.500 11.500v11"/></g></svg>
  <div class="a" style="left:349px;top:87px;width:22px;height:327px;background:linear-gradient(180deg,rgb(255,250,167),rgb(0,250,167))"></div>
  <svg style="left:344px;top:117px" width="32" height="12" viewBox="0 0 32 12"><path d="M1 1h4.500l4.500 5-4.500 5h-4.500z" fill="#f4f4f4" stroke="#666" stroke-width=".8"/><path d="M30 1h-4.500l-4.500 5 4.500 5h4.500z" fill="#f4f4f4" stroke="#666" stroke-width=".8"/></svg>
  <div class="a" style="left:390px;top:51px;width:80px;height:103px;background:#e4faa7;border:1px solid #6a6a6a"></div>
  <div class="a btn" style="top:49px;background:#3f97f0;border-color:#3f97f0;color:#fff">确定</div>
  <div class="a btn" style="top:95px">取消</div>
  <div class="a btn" style="top:140px">添加 RGB 色板</div>
  <div class="rad on" style="left:389px;top:190.0px"></div><div class="dl" style="left:415px;top:188.0px">R:</div><div class="df" style="left:437px;top:185.5px;width:51px">228</div>
<div class="rad" style="left:389px;top:222.5px"></div><div class="dl" style="left:415px;top:220.5px">G:</div><div class="df" style="left:437px;top:218.0px;width:51px">250</div>
<div class="rad" style="left:389px;top:254.8px"></div><div class="dl" style="left:415px;top:252.8px">B:</div><div class="df" style="left:437px;top:250.3px;width:51px">167</div>
<div class="rad" style="left:389px;top:318.5px"></div><div class="dl" style="left:415px;top:316.5px">L:</div><div class="df" style="left:437px;top:314.0px;width:51px">95</div>
<div class="rad" style="left:389px;top:351.0px"></div><div class="dl" style="left:415px;top:349.0px">a:</div><div class="df" style="left:437px;top:346.5px;width:51px">-18</div>
<div class="rad" style="left:389px;top:383.3px"></div><div class="dl" style="left:415px;top:381.3px">b:</div><div class="df" style="left:437px;top:378.8px;width:51px">37</div>
<div class="dl" style="left:523px;top:206.0px">C:</div><div class="df" style="left:544px;top:204.0px;width:51px">18</div><div class="dl" style="left:604px;top:206.0px">%</div>
<div class="dl" style="left:523px;top:238.5px">M:</div><div class="df" style="left:544px;top:236.5px;width:51px">0</div><div class="dl" style="left:604px;top:238.5px">%</div>
<div class="dl" style="left:523px;top:271.0px">Y:</div><div class="df" style="left:544px;top:269.0px;width:51px">44</div><div class="dl" style="left:604px;top:271.0px">%</div>
<div class="dl" style="left:523px;top:303.5px">K:</div><div class="df" style="left:544px;top:301.5px;width:51px">0</div><div class="dl" style="left:604px;top:303.5px">%</div>
<div class="dl" style="left:523px;top:398.5px">#:</div><div class="df" style="left:544px;top:398.5px;width:74px">e4faa7</div>
<svg style="left:624px;top:397px" width="24" height="24" viewBox="0 0 24 24"><path d="M4.500 19.500l1-3.500 9-9 2.500 2.500-9 9z" fill="none" stroke="#d0d0d0" stroke-width="1.600"/><path d="M13 6l5 5M14.500 7.500l3-3a2.100 2.100 0 0 1 3 3l-3 3z" fill="#d0d0d0" stroke="#d0d0d0" stroke-width="1.800" stroke-linecap="round"/></svg>

</div>

<div class="a" style="left:0px;top:511px;width:73px;height:78px;border:3px solid #e8211d;border-radius:6px"></div>
<div class="a" style="left:795px;top:373px;width:176px;height:60px;border:3px solid #e8211d;border-radius:4px"></div>
<svg style="left:0;top:0" width="1600" height="861" viewBox="0 0 1600 861"><g fill="#e8211d"><path d="M62.500 607.500L80.500 617L74.500 621.500L120 693L118 695L68.500 625.500L62.500 629.500z"/><path d="M954 444L974.500 452.500L968 457.500L1102 640L1100 642L962 462L956 466.500z"/></g></svg>
<div class="t" style="left:147px;top:688px;font-size:27.500px;line-height:32px;height:32px;color:#e8211d;font-weight:400">双击这里</div>
<div class="a" style="left:1213px;top:719px;width:320px;height:116px;border-radius:30px 26px 22px 34px;background:rgba(0,0,0,.09)"></div>
<svg style="left:1320px;top:690px" width="100" height="80" viewBox="0 0 100 80"><g fill="#d0d0d0" opacity=".82"><ellipse cx="21" cy="30" rx="7.500" ry="9.500" transform="rotate(-15 21 30)"/><ellipse cx="41" cy="14.500" rx="8.500" ry="11.500"/><ellipse cx="64.500" cy="17.500" rx="8.500" ry="11.500" transform="rotate(8 64.500 17.500)"/><ellipse cx="81" cy="32.500" rx="7.500" ry="9.500" transform="rotate(18 81 32.500)"/><path d="M51 33c9 0 14 8 20 15s8 16-2 20-12 0-18 0-10 3-18 0-9-12-3-19 12-16 21-16z"/></g></svg>
<div class="a" style="left:1255px;top:730px;width:270px;height:33px;overflow:hidden;opacity:.68"><div class="t" style="left:4px;top:-3px;font-size:46px;line-height:56px;height:56px;font-weight:bold;color:#e2e2e2;letter-spacing:-1px">Bai</div><div class="t" style="left:152px;top:-4px;font-size:44px;line-height:56px;height:56px;font-weight:500;color:#dedede;font-style:italic;transform:skewX(-8deg)">经验</div><div class="t" style="left:97px;top:14px;font-size:20px;line-height:22px;height:22px;font-weight:bold;color:#6e6e6e">du</div></div>
<div class="t" style="left:1290px;top:796px;font-size:22px;line-height:24px;height:24px;color:#5e5e5e;opacity:.4;letter-spacing:1px">jingyan.baidu.com</div>

<div class="a" id="botstrip"></div>
</body>
</html>
